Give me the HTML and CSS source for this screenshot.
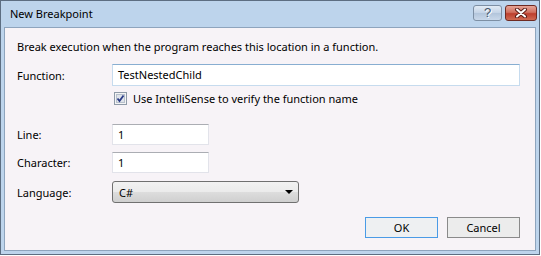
FILE: index.html
```html
<!DOCTYPE html>
<html lang="en">
<head>
    <meta charset="UTF-8">
    <title>New Breakpoint</title>
    <link rel="stylesheet" href="styles.css">
</head>
<body>

<div class="window">
    <div class="titlebar">
        <span class="title">New Breakpoint</span>
        <div class="caption-buttons">
            <div class="cap-btn help">?</div>
            <div class="cap-btn close">
                <svg width="14" height="10" viewBox="0 0 14 10">
                    <path d="M3 1.5 L11 8.5 M11 1.5 L3 8.5" stroke="#5a1c16" stroke-width="4" stroke-linecap="round"/>
                    <path d="M3 1.5 L11 8.5 M11 1.5 L3 8.5" stroke="#fff" stroke-width="2" stroke-linecap="round"/>
                </svg>
            </div>
        </div>
    </div>

    <div class="client">
        <p class="intro">Break execution when the program reaches this location in a function.</p>

        <div class="row row-function">
            <label>Function:</label>
            <div class="textbox textbox-wide focus">TestNestedChild</div>
        </div>

        <div class="row row-check">
            <span class="checkbox">
                <svg width="13" height="13" viewBox="0 0 13 13">
                    <rect x="0.5" y="0.5" width="12" height="12" fill="#f4f4f4" stroke="#8f9aa8"/>
                    <rect x="2.5" y="2.5" width="8" height="8" fill="#dfe3ea" stroke="#b7c0cc"/>
                    <path d="M3.5 6.5 L5.5 9 L9.5 3.5" fill="none" stroke="#2b3b86" stroke-width="1.8"/>
                </svg>
            </span>
            <span>Use IntelliSense to verify the function name</span>
        </div>

        <div class="row row-line">
            <label>Line:</label>
            <div class="textbox textbox-small">1</div>
        </div>

        <div class="row row-char">
            <label>Character:</label>
            <div class="textbox textbox-small">1</div>
        </div>

        <div class="row row-lang">
            <label>Language:</label>
            <div class="combo">
                <span>C#</span>
                <span class="arrow"></span>
            </div>
        </div>

        <div class="buttons">
            <div class="btn btn-default">OK</div>
            <div class="btn">Cancel</div>
        </div>
    </div>
</div>

</body>
</html>
```

FILE: styles.css
```css
body {
    margin: 0;
    background-color: #fff;
    font-family: "Noto Sans", "Open Sans", sans-serif;
    font-size: 11px;
    color: #000;
}
.window {
    width: 538px;
    height: 253px;
    border: 1px solid #5d6e82;
    background-color: #bdd4ec;
    display: flex;
    flex-direction: column;
}
.titlebar {
    height: 26px;
    display: flex;
    justify-content: space-between;
    align-items: flex-start;
    padding: 0 2px 0 9px;
}
.title {
    line-height: 26px;
    color: #000;
}
.caption-buttons {
    display: flex;
    gap: 3px;
    margin-top: 4px;
}
.cap-btn {
    height: 14px;
    border-radius: 3px;
    display: flex;
    justify-content: center;
    align-items: center;
}
.help {
    width: 27px;
    border: 1px solid #7d8fa4;
    background: linear-gradient(#e2ebf5, #c3d3e6 50%, #b2c5db 51%, #c9d8ea);
    color: #46566a;
    font-family: "Liberation Sans", sans-serif;
    font-size: 13px;
    line-height: 14px;
    text-shadow: 1px 1px 0 #fff;
}
.close {
    width: 30px;
    border: 1px solid #6e2a22;
    background: linear-gradient(#e6a496, #d0705f 45%, #bd3f2e 55%, #cf6a52);
}
.client {
    flex: 1;
    margin: 0 3px 3px 3px;
    border: 1px solid #8ea4bd;
    background-color: #f7f3f7;
    padding: 11px 14px 0 12px;
}
.intro {
    margin: 0;
    line-height: 16px;
}
.row {
    display: flex;
    align-items: center;
}
.row label {
    width: 95px;
}
.row-function {
    margin-top: 9px;
}
.row-check {
    margin-top: 6px;
    height: 13px;
    padding-left: 97px;
    gap: 6px;
}
.checkbox {
    display: flex;
}
.row-line {
    margin-top: 19px;
}
.row-char {
    margin-top: 7px;
}
.row-lang {
    margin-top: 8px;
}
.textbox {
    box-sizing: border-box;
    height: 21px;
    background-color: #fff;
    border: 1px solid #e2e3ea;
    border-top-color: #abadb3;
    padding-left: 5px;
    line-height: 19px;
}
.textbox-wide {
    width: 408px;
    height: 22px;
    line-height: 20px;
}
.textbox-small {
    width: 97px;
}
.focus {
    border-color: #c6dbee;
    border-top-color: #88aed1;
}
.combo {
    box-sizing: border-box;
    width: 187px;
    height: 22px;
    border: 1px solid #707070;
    border-radius: 3px;
    background: linear-gradient(#f2f2f2, #ebebeb 50%, #dddddd 51%, #cfcfcf);
    display: flex;
    justify-content: space-between;
    align-items: center;
    padding: 0 5px 0 6px;
}
.arrow {
    width: 0;
    height: 0;
    border-left: 4px solid transparent;
    border-right: 4px solid transparent;
    border-top: 4px solid #000;
}
.buttons {
    display: flex;
    justify-content: flex-end;
    gap: 9px;
    margin-top: 14px;
    padding-right: 1px;
}
.btn {
    box-sizing: border-box;
    height: 21px;
    width: 73px;
    border: 1px solid #8a8a8a;
    background-color: #ececec;
    display: flex;
    justify-content: center;
    align-items: center;
}
.btn-default {
    border-color: #4a9be6;
    background-color: #eef0f2;
}
```
